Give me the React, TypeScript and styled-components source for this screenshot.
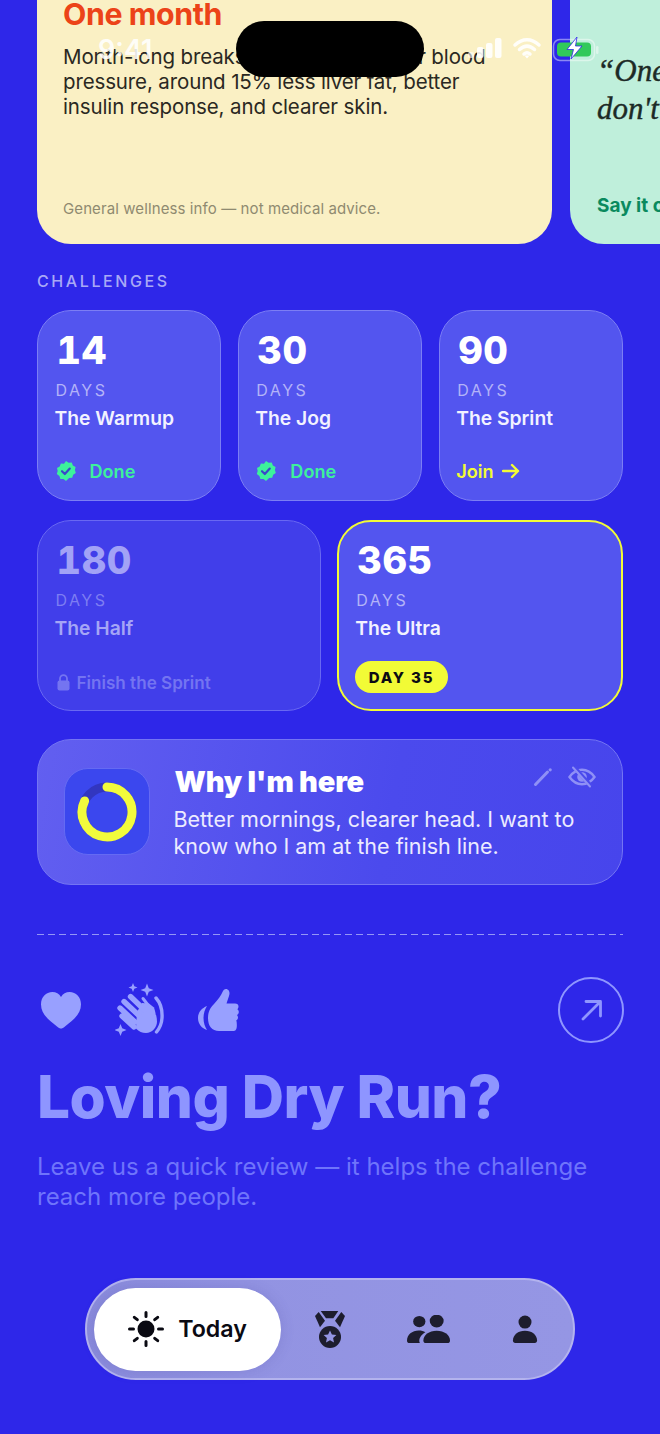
import React from 'react';
import styled, { createGlobalStyle } from 'styled-components';

const GlobalStyle = createGlobalStyle`
    html, body {
        margin: 0;
        padding: 0;
        background: #2e27e9;
        font-family: Inter, "Liberation Sans", sans-serif;
    }
`;

const Screen = styled.div`
    position: relative;
    width: 660px;
    height: 1434px;
    overflow: hidden;
    background: #2e27e9;
`;

const StatusBar = styled.div`
    position: absolute;
    top: 0;
    left: 0;
    width: 660px;
    height: 80px;
`;

const Clock = styled.span`
    position: absolute;
    left: 98px;
    top: 35px;
    font-size: 27px;
    font-weight: 600;
    line-height: 30px;
    color: rgba(255, 255, 255, 0.88);
`;

const Island = styled.div`
    position: absolute;
    left: 236px;
    top: 21px;
    width: 188px;
    height: 56px;
    border-radius: 28px;
    background: #000;
`;

const StatusIcons = styled.svg`
    position: absolute;
    left: 465px;
    top: 34px;
`;

const Carousel = styled.div`
    display: flex;
    gap: 18.5px;
    margin-top: -20px;
    padding-left: 37px;
    width: 800px;
`;

const InfoCard = styled.div`
    box-sizing: border-box;
    flex: 0 0 514.5px;
    height: 264px;
    padding: 16px 26px 26px;
    display: flex;
    flex-direction: column;
    border-radius: 0 0 34px 34px;
    background: #faf0c4;
`;

const InfoTitle = styled.h2`
    margin: 0;
    font-size: 30.3px;
    line-height: 36px;
    font-weight: 700;
    letter-spacing: -0.4px;
    color: #ec4318;
`;

const InfoBody = styled.p`
    margin: 12px 0 0;
    font-size: 20.5px;
    line-height: 25.2px;
    letter-spacing: -0.13px;
    color: #2a2822;
`;

const InfoNote = styled.p`
    margin: auto 0 0;
    font-size: 15px;
    line-height: 18px;
    letter-spacing: 0.1px;
    color: #8f8a70;
`;

const QuoteCard = styled.div`
    box-sizing: border-box;
    flex: 0 0 200px;
    height: 264px;
    padding: 72px 0 26px 27px;
    display: flex;
    flex-direction: column;
    border-radius: 0 0 0 34px;
    background: #bfefdb;
`;

const Quote = styled.p`
    margin: 0;
    font-family: "Liberation Serif", serif;
    font-style: italic;
    font-weight: 400;
    font-size: 31px;
    line-height: 38px;
    white-space: nowrap;
    color: #1c2a26;
    -webkit-text-stroke: 0.4px #1c2a26;
`;

const QuoteLink = styled.span`
    margin-top: auto;
    font-size: 19px;
    line-height: 24px;
    font-weight: 700;
    white-space: nowrap;
    color: #0a8a5e;
`;

const Challenges = styled.section`
    padding: 27px 37px 0;
`;

const SectionLabel = styled.h3`
    margin: 0 0 19px;
    font-size: 16px;
    line-height: 20px;
    font-weight: 500;
    letter-spacing: 2.6px;
    color: #a9a9f6;
`;

const CardRow = styled.div<{ $gap: number }>`
    display: flex;
    gap: ${({ $gap }) => $gap}px;
    margin-bottom: 19px;
`;

const Card = styled.div<{ $active?: boolean; $locked?: boolean }>`
    box-sizing: border-box;
    flex: 1 1 0;
    height: 191px;
    padding: ${({ $active }) => ($active ? '15px 16px 13px 16px' : '16px 16px 13px 16.5px')};
    display: flex;
    flex-direction: column;
    border-radius: 34px;
    background: ${({ $locked }) => ($locked ? '#413eea' : '#5355ef')};
    border: ${({ $active, $locked }) =>
        $active ? '2px solid #f2fb36' : `1.5px solid ${$locked ? '#6968f2' : '#7c7ef4'}`};
`;

const Days = styled.div<{ $locked?: boolean }>`
    font-size: 38px;
    line-height: 46px;
    font-weight: 800;
    letter-spacing: 0.6px;
    margin-left: 2px;
    font-variant-numeric: tabular-nums;
    color: ${({ $locked }) => ($locked ? '#a2a2f6' : '#fff')};
`;

const DaysLabel = styled.div<{ $locked?: boolean }>`
    margin: 7px 0 0 1px;
    font-size: 16px;
    line-height: 20px;
    letter-spacing: 2.5px;
    color: ${({ $locked }) => ($locked ? '#7d7df2' : '#b3b3f8')};
`;

const CardTitle = styled.div<{ $locked?: boolean }>`
    margin-top: 6px;
    font-size: 19.3px;
    line-height: 24px;
    font-weight: 600;
    color: ${({ $locked }) => ($locked ? '#a5a5f6' : '#f2f2ff')};
`;

const CardFooter = styled.div<{ $lift?: number }>`
    margin-top: auto;
    margin-bottom: ${({ $lift }) => $lift ?? 0}px;
    display: flex;
    align-items: center;
    min-height: 32px;
`;

const DoneText = styled.span`
    margin-left: 13px;
    font-size: 18.1px;
    font-weight: 600;
    color: #3df19b;
`;

const JoinText = styled.span`
    font-size: 18.2px;
    font-weight: 600;
    color: #f2fb36;
    margin-right: 8px;
`;

const LockWrap = styled.span`
    display: inline-flex;
    margin-left: 2px;
`;

const LockedText = styled.span`
    margin-left: 7px;
    font-size: 17.1px;
    font-weight: 600;
    color: #7474f1;
`;

const DayBadge = styled.span`
    height: 32px;
    padding: 0 13.5px;
    display: inline-flex;
    align-items: center;
    border-radius: 16px;
    background: #f2fb36;
    color: #0c0c14;
    font-size: 15px;
    font-weight: 800;
    letter-spacing: 1.8px;
`;

const WhyCard = styled.div`
    position: relative;
    box-sizing: border-box;
    margin: 28px 37px 0;
    height: 146px;
    padding: 28px 25.5px 0;
    display: flex;
    gap: 24px;
    border-radius: 34px;
    border: 1.5px solid #7475f3;
    background: linear-gradient(100deg, #625ff0 0%, #4b4aed 60%, #4745ec 100%);
`;

const RingBox = styled.div`
    box-sizing: border-box;
    flex: 0 0 86px;
    height: 87px;
    display: flex;
    align-items: center;
    justify-content: center;
    border-radius: 24px;
    border: 1.5px solid #656af3;
    background: #3b47ee;
`;

const WhyText = styled.div`
    margin-top: -3px;
`;

const WhyTitle = styled.h3`
    margin: 0 0 7px 1px;
    font-size: 29px;
    line-height: 34px;
    font-weight: 900;
    letter-spacing: -0.2px;
    color: #fff;
`;

const WhyBody = styled.p`
    margin: 0;
    font-size: 21.5px;
    line-height: 27px;
    color: #ecebff;
`;

const WhyActions = styled.div`
    position: absolute;
    top: 26px;
    right: 26px;
    display: flex;
    align-items: center;
    gap: 15px;
`;

const Divider = styled.hr`
    margin: 49px 37px 0;
    border: 0;
    height: 1px;
    background: repeating-linear-gradient(90deg, #9496f6 0 7px, transparent 7px 11px);
`;

const ReviewSection = styled.section`
    padding: 42px 36px 0 37px;
`;

const ReviewIcons = styled.div`
    display: flex;
    align-items: center;
    height: 66px;
`;

const ArrowButton = styled.div`
    box-sizing: border-box;
    margin-left: auto;
    width: 66px;
    height: 66px;
    border-radius: 50%;
    border: 2.5px solid #8f96ff;
    display: flex;
    align-items: center;
    justify-content: center;
`;

const ReviewTitle = styled.h2`
    margin: 22px 0 0;
    font-size: 58.5px;
    line-height: 64px;
    font-weight: 800;
    letter-spacing: -0.5px;
    color: #8e95ff;
`;

const ReviewText = styled.p`
    margin: 23px 0 0;
    font-size: 24px;
    line-height: 30px;
    color: #6f74fb;
`;

const NavBar = styled.nav`
    position: absolute;
    left: 85px;
    top: 1278px;
    box-sizing: border-box;
    width: 490px;
    height: 102px;
    padding: 7px;
    display: flex;
    align-items: center;
    border-radius: 51px;
    border: 2px solid #b3b3ee;
    background: linear-gradient(90deg, #8a8bdc 0%, #9293e2 30%, #9596e4 100%);
`;

const ActiveTab = styled.div`
    flex: 0 0 187px;
    height: 83px;
    display: flex;
    align-items: center;
    justify-content: center;
    gap: 14px;
    border-radius: 42px;
    background: #fff;
    box-shadow: 0 0 14px rgba(60, 60, 150, 0.18);
    font-size: 23.2px;
    font-weight: 600;
    color: #0a0a12;
`;

const NavItem = styled.div<{ $width: number }>`
    flex: 0 0 ${({ $width }) => $width}px;
    display: flex;
    justify-content: center;
`;

const CheckBadge = () => (
    <svg width="22" height="22" viewBox="0 0 22 22">
        <path
            fill="#3df19b"
            d="M11 1l2.600 1.800 3.100-.3 1.200 2.900 2.700 1.600-.7 3 .9 3-2.600 1.800-1 3-3.100.1L11 20.900 8.500 19l-3.100-.1-1-3L1.800 14l.9-3-.7-3 2.700-1.600 1.200-2.900 3.100.3z"
        />
        <path d="M7 11.200l2.800 2.800 5-5.400" fill="none" stroke="#3b47c8" strokeWidth="2.200" strokeLinecap="round" strokeLinejoin="round" />
    </svg>
);

const LockIcon = () => (
    <svg width="13" height="17" viewBox="0 0 13 17">
        <path d="M3 7V4.600a3.500 3.500 0 0 1 7 0V7" fill="none" stroke="#7474f1" strokeWidth="1.800" />
        <rect x="0.500" y="6.500" width="12" height="10" rx="2" fill="#7474f1" />
    </svg>
);

const ArrowRight = () => (
    <svg width="18" height="16" viewBox="0 0 18 16">
        <path d="M1 8h15M10 2l6 6-6 6" fill="none" stroke="#f2fb36" strokeWidth="2.400" strokeLinecap="round" strokeLinejoin="round" />
    </svg>
);

const Ring = () => (
    <svg width="60" height="60" viewBox="0 0 60 60">
        <circle cx="30" cy="30" r="25" fill="none" stroke="#3236c0" strokeWidth="9" />
        <path d="M30 5a25 25 0 1 1-22.400 13.900" fill="none" stroke="#f2fb3c" strokeWidth="9" strokeLinecap="round" />
    </svg>
);

const Pencil = () => (
    <svg width="20" height="20" viewBox="0 0 20 20">
        <path d="M2.500 17.500L14.500 5" stroke="#8f90f6" strokeWidth="3" strokeLinecap="round" />
        <circle cx="17.200" cy="2.800" r="1.600" fill="#8f90f6" />
    </svg>
);

const EyeOff = () => (
    <svg width="28" height="22" viewBox="0 0 28 22">
        <path d="M1.500 11C5 6 9 3.800 14 3.800S23 6 26.500 11C23 16 19 18.200 14 18.200S5 16 1.500 11z" fill="none" stroke="#8f90f6" strokeWidth="2.400" />
        <circle cx="14" cy="11" r="4.800" fill="#8f90f6" />
        <path d="M6.500 1.500L23.500 20.500" stroke="#4b4aed" strokeWidth="4" />
        <path d="M5 1.500L22 20.500" stroke="#8f90f6" strokeWidth="2" strokeLinecap="round" />
    </svg>
);

const Heart = () => (
    <svg width="42" height="38" viewBox="0 0 42 38" style={{ marginLeft: 3 }}>
        <path
            fill="#98a0ff"
            d="M21 37.500C19.800 37.500 18.800 36.800 17 35.400 8 28.600 1 22.500 1 13.200 1 6.200 6 1 12.400 1 16 1 19.200 2.800 21 5.900 22.800 2.800 26 1 29.600 1 36 1 41 6.200 41 13.200 41 22.500 34 28.600 25 35.400 23.200 36.800 22.200 37.500 21 37.500z"
        />
    </svg>
);

const Clap = () => (
    <svg width="52" height="56" viewBox="0 0 52 56" style={{ marginLeft: 33 }}>
        <g fill="#98a0ff">
            <path d="M18 1l1.300 3.200 3.200 1.300-3.200 1.300L18 10l-1.300-3.200L13.500 5.500l3.200-1.300z" />
            <path d="M32 1.500l1.800 4.700 4.700 1.800-4.700 1.800L32 14.500l-1.800-4.700-4.700-1.800 4.700-1.800z" />
            <path d="M5.500 42l1.700 4.300 4.300 1.700-4.300 1.700-1.700 4.300-1.700-4.300L-.5 48l4.300-1.700z" />
            <path d="M22 30l5-9 7 .5 5 4c1.500 5 3 10 3 14 0 6-5 11.500-11 11.500-4 0-7-1.500-10-4.500z" />
        </g>
        <g stroke="#98a0ff" strokeWidth="5.400" strokeLinecap="round" fill="none">
            <path d="M5 26l15 14M9 19.500l16 15M15.500 14.500l14 13.500M7 34l12 11" />
        </g>
        <path d="M28 16.500l5 6.500" stroke="#98a0ff" strokeWidth="3" strokeLinecap="round" />
        <path d="M39 19c2 5 3 9 2.500 14" stroke="#2e27e9" strokeWidth="1.500" fill="none" />
        <path d="M41 16c4.500 5 6.500 12 6 20-.3 5.500-2.200 10-5.500 14" fill="none" stroke="#98a0ff" strokeWidth="3.400" strokeLinecap="round" />
    </svg>
);

const Thumb = () => (
    <svg width="44" height="46" viewBox="0 0 44 46" style={{ marginLeft: 30 }}>
        <g fill="#98a0ff">
            <path d="M10 19c-5 2-9 6-9 12s4 10.500 9 12c-2-3-3.500-7-3.500-12S8 22 10 19z" />
            <path d="M11 31c0-6 2-10 6-14 4-4.500 7-8.500 8.500-12C26.500 2.500 28.500 1.500 30.500 2.500c2 1 2.500 3.500 1.500 6.500l-2.500 7.500H38c2.200 0 3.500 1.300 3.500 3 0 1.200-.5 2-1.200 2.700 1 .6 1.500 1.600 1.500 2.800 0 1.400-.7 2.500-1.800 3 .7.700 1 1.500 1 2.500 0 1.400-.7 2.400-1.800 3 .3.600.5 1.200.5 1.900C40.300 41.800 39 44 36 44H22C15 44 11 39 11 31z" />
        </g>
    </svg>
);

const OutArrow = () => (
    <svg width="24" height="24" viewBox="0 0 24 24">
        <path d="M4 21L21 4M7 3.500h14.500V18" fill="none" stroke="#8f96ff" strokeWidth="2.800" strokeLinecap="round" strokeLinejoin="round" />
    </svg>
);

const Sun = () => (
    <svg width="36" height="36" viewBox="0 0 36 36">
        <circle cx="18" cy="18" r="8.500" fill="#0a0a12" />
        <g stroke="#0a0a12" strokeWidth="3" strokeLinecap="round">
            <path d="M18 1.500v4M18 30.500v4M1.500 18h4M30.500 18h4M6.300 6.300l3 2.400M29.700 6.300l-3 2.400M6.300 29.700l3-2.400M29.700 29.700l-3-2.400" />
        </g>
    </svg>
);

const Medal = () => (
    <svg width="30" height="38" viewBox="0 0 30 38">
        <g fill="#1d1d2e">
            <path d="M5.700 1h17.600l-5 7.300H11z" />
            <path d="M0 6l3.700-4L10 10.700l-5 6.600z" />
            <path d="M30 6l-3.700-4L20 10.700l5 6.600z" />
            <circle cx="15" cy="27" r="11" />
        </g>
        <path d="M15 20.500l1.900 4.100 4.500.5-3.300 3 .9 4.400-4-2.200-4 2.200.9-4.400-3.300-3 4.500-.5z" fill="#9394e3" />
    </svg>
);

const People = () => (
    <svg width="43" height="28" viewBox="0 0 42 30" preserveAspectRatio="none">
        <g fill="#1d1d2e">
            <circle cx="12" cy="7" r="6" />
            <circle cx="29" cy="6.500" r="6.800" />
            <path d="M0 27.500C0 21 5 16.500 11.500 16.500c2.500 0 4.700.7 6.500 1.900C14.500 20.500 12 24 12 27.500c0 1 .2 1.800.6 2.500H2.500C1 30 0 29 0 27.500z" />
            <path d="M16 27.500C16 21.500 21.500 17 29 17s13 4.500 13 10.500c0 1.500-1 2.500-2.500 2.500h-21C17 30 16 29 16 27.500z" />
        </g>
    </svg>
);

const Person = () => (
    <svg width="26" height="28" viewBox="0 0 28 30">
        <g fill="#1d1d2e">
            <circle cx="14" cy="7.500" r="7" />
            <path d="M1 27.500C1 21.500 6.500 17 14 17s13 4.500 13 10.500c0 1.500-1 2.500-2.500 2.500h-21C2 30 1 29 1 27.500z" />
        </g>
    </svg>
);

const App: React.FC = () => {
    return (
        <Screen>
            <GlobalStyle />
            <Carousel>
                <InfoCard>
                    <InfoTitle>One month</InfoTitle>
                    <InfoBody>
                        Month-long breaks are linked to lower blood pressure, around 15% less liver fat, better insulin response, and clearer skin.
                    </InfoBody>
                    <InfoNote>General wellness info — not medical advice.</InfoNote>
                </InfoCard>
                <QuoteCard>
                    <Quote>
                        “One day
                        <br />
                        don't
                    </Quote>
                    <QuoteLink>Say it out</QuoteLink>
                </QuoteCard>
            </Carousel>

            <Challenges>
                <SectionLabel>CHALLENGES</SectionLabel>
                <CardRow $gap={16.5}>
                    <Card>
                        <Days>14</Days>
                        <DaysLabel>DAYS</DaysLabel>
                        <CardTitle>The Warmup</CardTitle>
                        <CardFooter>
                            <CheckBadge />
                            <DoneText>Done</DoneText>
                        </CardFooter>
                    </Card>
                    <Card>
                        <Days>30</Days>
                        <DaysLabel>DAYS</DaysLabel>
                        <CardTitle>The Jog</CardTitle>
                        <CardFooter>
                            <CheckBadge />
                            <DoneText>Done</DoneText>
                        </CardFooter>
                    </Card>
                    <Card>
                        <Days>90</Days>
                        <DaysLabel>DAYS</DaysLabel>
                        <CardTitle>The Sprint</CardTitle>
                        <CardFooter>
                            <JoinText>Join</JoinText>
                            <ArrowRight />
                        </CardFooter>
                    </Card>
                </CardRow>
                <CardRow $gap={16}>
                    <Card $locked>
                        <Days $locked>180</Days>
                        <DaysLabel $locked>DAYS</DaysLabel>
                        <CardTitle $locked>The Half</CardTitle>
                        <CardFooter $lift={-1}>
                            <LockWrap>
                                <LockIcon />
                            </LockWrap>
                            <LockedText>Finish the Sprint</LockedText>
                        </CardFooter>
                    </Card>
                    <Card $active>
                        <Days>365</Days>
                        <DaysLabel>DAYS</DaysLabel>
                        <CardTitle>The Ultra</CardTitle>
                        <CardFooter $lift={3}>
                            <DayBadge>DAY 35</DayBadge>
                        </CardFooter>
                    </Card>
                </CardRow>
            </Challenges>

            <WhyCard>
                <RingBox>
                    <Ring />
                </RingBox>
                <WhyText>
                    <WhyTitle>Why I'm here</WhyTitle>
                    <WhyBody>
                        Better mornings, clearer head. I want to know who I am at the finish line.
                    </WhyBody>
                </WhyText>
                <WhyActions>
                    <Pencil />
                    <EyeOff />
                </WhyActions>
            </WhyCard>

            <Divider />

            <ReviewSection>
                <ReviewIcons>
                    <Heart />
                    <Clap />
                    <Thumb />
                    <ArrowButton>
                        <OutArrow />
                    </ArrowButton>
                </ReviewIcons>
                <ReviewTitle>Loving Dry Run?</ReviewTitle>
                <ReviewText>Leave us a quick review — it helps the challenge reach more people.</ReviewText>
            </ReviewSection>

            <NavBar>
                <ActiveTab>
                    <Sun />
                    Today
                </ActiveTab>
                <NavItem $width={98}>
                    <Medal />
                </NavItem>
                <NavItem $width={98}>
                    <People />
                </NavItem>
                <NavItem $width={96}>
                    <Person />
                </NavItem>
            </NavBar>

            <StatusBar>
                <Clock>9:41</Clock>
                <Island />
                <StatusIcons width="140" height="30" viewBox="0 0 140 30">
                    <g fill="#fff" fillOpacity="0.9">
                        <rect x="3" y="18" width="6" height="6" rx="2" fillOpacity="0.6" />
                        <rect x="12" y="13" width="6.500" height="11" rx="2" />
                        <rect x="21" y="9" width="6.500" height="15" rx="2" />
                        <rect x="30" y="4" width="6.500" height="20" rx="2" />
                    </g>
                    <path d="M50 11c7.500-7 16.500-7 24 0M54.500 15.500c5-4.500 10-4.500 15 0M59 20c2-1.700 4-1.700 6 0" fill="none" stroke="#fff" strokeOpacity="0.9" strokeWidth="3.500" strokeLinecap="round" />
                    <path d="M59.500 21.500L62 24.500l2.500-3z" fill="#fff" />
                    <rect x="88.500" y="5.500" width="41" height="21" rx="6.500" fill="none" stroke="#fff" strokeOpacity="0.45" strokeWidth="1.500" />
                    <rect x="92" y="8.500" width="34" height="14" rx="4" fill="#31c95a" />
                    <rect x="131" y="12" width="2.500" height="8" rx="1.200" fill="#fff" fillOpacity="0.45" />
                    <path d="M112 3l-10 12.500h6.500l-2.500 9.500 11-13h-6.500z" fill="#fff" stroke="#2e27e9" strokeWidth="0.800" />
                </StatusIcons>
            </StatusBar>
        </Screen>
    );
};

export default App;
